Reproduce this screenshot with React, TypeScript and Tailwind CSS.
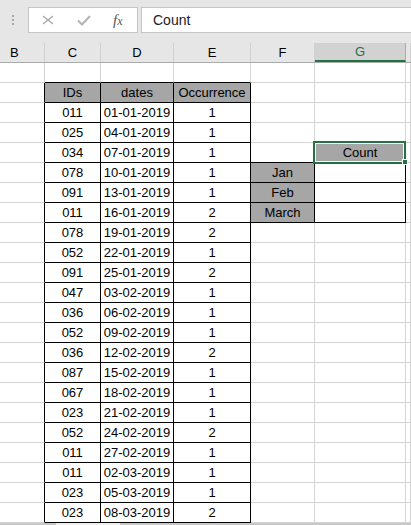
import React from "react";

const COLS = [
  { name: "B", w: 45 },
  { name: "C", w: 56 },
  { name: "D", w: 73 },
  { name: "E", w: 77 },
  { name: "F", w: 64 },
  { name: "G", w: 91 },
  { name: "H", w: 5 },
];

const DATA: [string, string, string][] = [
  ["011", "01-01-2019", "1"],
  ["025", "04-01-2019", "1"],
  ["034", "07-01-2019", "1"],
  ["078", "10-01-2019", "1"],
  ["091", "13-01-2019", "1"],
  ["011", "16-01-2019", "2"],
  ["078", "19-01-2019", "2"],
  ["052", "22-01-2019", "1"],
  ["091", "25-01-2019", "2"],
  ["047", "03-02-2019", "1"],
  ["036", "06-02-2019", "1"],
  ["052", "09-02-2019", "1"],
  ["036", "12-02-2019", "2"],
  ["087", "15-02-2019", "1"],
  ["067", "18-02-2019", "1"],
  ["023", "21-02-2019", "1"],
  ["052", "24-02-2019", "2"],
  ["011", "27-02-2019", "1"],
  ["011", "02-03-2019", "1"],
  ["023", "05-03-2019", "1"],
  ["023", "08-03-2019", "2"],
];

const NROWS = 23;

function bordered(r: number, c: number): boolean {
  if (c >= 1 && c <= 3 && r >= 1 && r <= 22) return true;
  if (c >= 4 && c <= 5 && r >= 5 && r <= 7) return true;
  return false;
}

function filled(r: number, c: number): boolean {
  if (r === 1 && c >= 1 && c <= 3) return true;
  if (c === 4 && r >= 5 && r <= 7) return true;
  if (c === 5 && r === 4) return true;
  return false;
}

function cellText(r: number, c: number): string {
  if (r === 1) {
    if (c === 1) return "IDs";
    if (c === 2) return "dates";
    if (c === 3) return "Occurrence";
  }
  if (r >= 2 && r <= 22 && c >= 1 && c <= 3) return DATA[r - 2][c - 1];
  if (c === 4) {
    if (r === 5) return "Jan";
    if (r === 6) return "Feb";
    if (r === 7) return "March";
  }
  if (c === 5 && r === 4) return "Count";
  return "";
}

export default function App() {
  const rows = Array.from({ length: NROWS }, (_, r) => r);
  return (
    <div
      className="relative w-[411px] h-[525px] overflow-hidden bg-[#e6e6e6] text-black"
      style={{ fontFamily: '"Liberation Sans", Arial, sans-serif' }}
    >
      {/* Formula bar */}
      <div className="flex h-[43px] items-start pt-[7px]">
        <div className="ml-[12px] mt-[8px] flex w-[2px] flex-col gap-[2px]">
          <div className="h-[2px] w-[2px] bg-[#a8a8a8]" />
          <div className="h-[2px] w-[2px] bg-[#a8a8a8]" />
          <div className="h-[2px] w-[2px] bg-[#a8a8a8]" />
        </div>
        <div className="ml-[14px] flex h-[26px] w-[110px] items-center border border-[#c6c6c6] bg-white">
          <svg width="12" height="10" viewBox="0 0 12 10" className="ml-[13px]">
            <path d="M1 1 L11 9 M11 1 L1 9" stroke="#a6a6a6" strokeWidth="1.3" fill="none" />
          </svg>
          <svg width="14" height="11" viewBox="0 0 14 11" className="ml-[23px]">
            <path d="M1 5.5 L5 9.5 L13 1" stroke="#b4b4b4" strokeWidth="2" fill="none" />
          </svg>
          <span
            className="ml-[22px] text-[15px] italic leading-none text-[#555555]"
            style={{ fontFamily: '"Liberation Serif", "Times New Roman", serif' }}
          >
            f<span className="text-[12px]">x</span>
          </span>
        </div>
        <div className="ml-[3px] flex h-[26px] flex-1 items-center border border-r-0 border-[#c6c6c6] bg-white pl-[11px] text-[14px] text-[#222]">
          Count
        </div>
      </div>

      {/* Column headers */}
      <div className="flex h-[20px] border-b border-[#ababab]">
        {COLS.map((col, i) => {
          const sel = col.name === "G";
          return (
            <div
              key={col.name}
              style={{ width: col.w }}
              className={
                "flex shrink-0 items-center text-[13px] " +
                (i === 0 ? "justify-start pl-[10px] " : "justify-center ") +
                (sel
                  ? "bg-[#d2d2d2] text-[#217346] border-b-2 border-b-[#217346] border-r border-r-[#ababab] "
                  : "border-r border-r-[#d0d0d0] ")
              }
            >
              {col.name === "H" ? "" : col.name}
            </div>
          );
        })}
      </div>

      {/* Grid */}
      <div className="bg-white">
        {rows.map((r) => (
          <div key={r} className="flex h-[20px]">
            {COLS.map((col, c) => {
              const rightBlack = bordered(r, c) || bordered(r, c + 1);
              const bottomBlack = bordered(r, c) || bordered(r + 1, c);
              const txt = cellText(r, c);
              return (
                <div
                  key={c}
                  style={{ width: col.w }}
                  className={
                    "flex shrink-0 justify-center overflow-visible whitespace-nowrap border-r border-b text-[13px] leading-[19px] " +
                    (rightBlack ? "border-r-black " : "border-r-[#d4d4d4] ") +
                    (bottomBlack ? "border-b-black " : "border-b-[#d4d4d4] ") +
                    (filled(r, c) ? "bg-[#a6a6a6]" : "bg-white")
                  }
                >
                  {txt}
                </div>
              );
            })}
          </div>
        ))}
      </div>

      {/* Sheet tab strip */}
      <div className="flex h-[2px] bg-[#c8c8c8]">
        <div className="ml-[56px] h-[2px] w-[64px] bg-[#f0f0f0]" />
      </div>

      {/* Selection overlay */}
      <div className="absolute left-[313px] top-[141px] h-[23px] w-[93px] border-2 border-[#217346] shadow-[inset_0_0_0_1px_#ffffff]" />
      <div className="absolute left-[402px] top-[159px] h-[6px] w-[6px] border border-white bg-[#217346]" />
    </div>
  );
}
